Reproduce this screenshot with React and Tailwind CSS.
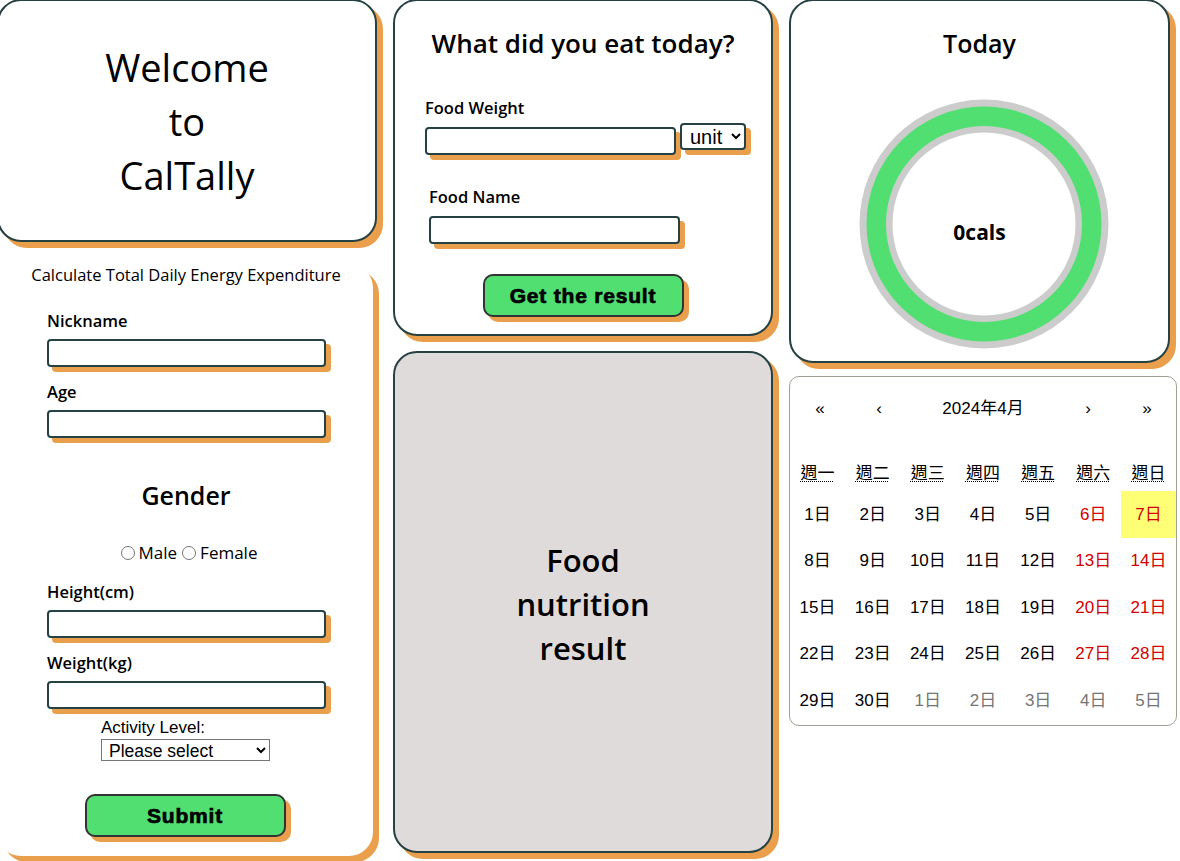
import React from 'react';

const UI = { fontFamily: '"Open Sans", "Noto Sans", sans-serif' };
const ARIAL = { fontFamily: '"Liberation Sans", Arial, sans-serif' };
const CAL = { fontFamily: '"Liberation Sans", Arial, "Noto Sans CJK TC", sans-serif' };

function Field({ label, className = '' }) {
    return (
        <div className={className}>
            <div className="text-[16.5px] font-semibold leading-[22px] text-black">{label}</div>
            <input
                type="text"
                className="mt-[7px] block w-[279px] h-[28px] border-2 border-[#264143] rounded-[4px] bg-white shadow-[5px_5px_0_#E99F4C] outline-none"
            />
        </div>
    );
}

function GreenButton({ children }) {
    return (
        <button
            className="w-[201px] h-[43px] rounded-[10px] border-2 border-[#333333] bg-[#52df72] shadow-[5px_5px_0_#E99F4C] text-[21px] font-bold tracking-[0.8px] text-black [-webkit-text-stroke:0.7px_black]"
            style={ARIAL}
        >
            {children}
        </button>
    );
}

function Calendar() {
    const weekdays = ['週一', '週二', '週三', '週四', '週五', '週六', '週日'];
    const days = [];
    for (let i = 1; i <= 30; i++) days.push({ d: i, cur: true });
    for (let i = 1; i <= 5; i++) days.push({ d: i, cur: false });

    return (
        <div className="w-[388px] h-[350px] border border-[#a0a096] rounded-[10px] bg-white overflow-hidden text-[17px] text-black" style={CAL}>
            {/* navigation */}
            <div className="flex h-[60px] items-center pt-[4px]">
                <div className="w-[60px] text-center">«</div>
                <div className="w-[58px] text-center">‹</div>
                <div className="flex-1 text-center">2024年4月</div>
                <div className="w-[60px] text-center">›</div>
                <div className="w-[58px] text-center">»</div>
            </div>
            <div className="grid grid-cols-7 h-[34px] mt-[20px] items-center">
                {weekdays.map(w => (
                    <div key={w} className="text-center">
                        <abbr className="underline decoration-dotted decoration-1 underline-offset-2" title={w}>{w}</abbr>
                    </div>
                ))}
            </div>
            <div className="grid grid-cols-7">
                {days.map((x, i) => {
                    const col = i % 7;
                    const isToday = x.cur && x.d === 7;
                    const color = !x.cur
                        ? 'text-[#757575]'
                        : col >= 5
                            ? 'text-[#d10000]'
                            : 'text-black';
                    return (
                        <div
                            key={i}
                            className={`h-[46.5px] flex items-center justify-center ${color} ${isToday ? 'bg-[#ffff76]' : ''}`}
                        >
                            {x.d}日
                        </div>
                    );
                })}
            </div>
        </div>
    );
}

export default function App() {
    return (
        <div className="bg-white w-[1180px] h-[861px] overflow-hidden" style={UI}>
            <div className="flex items-start gap-[15px] -mt-[1px] -ml-[3px]">
                {/* column 1 */}
                <div className="w-[380px] flex flex-col">
                    <div className="h-[243px] border-2 border-[#264143] rounded-[24px] bg-white shadow-[6px_6px_0_#E99F4C] flex items-center justify-center">
                        <div className="text-center text-[38px] leading-[54px] text-black">
                            Welcome<br />to<br />CalTally
                        </div>
                    </div>
                    <div className="mt-[22px] w-[376px] h-[592px] rounded-[24px] bg-white shadow-[6px_6px_0_#E99F4C] flex flex-col">
                        <div className="text-center text-[16.5px] leading-[22px] pl-[2px]">
                            Calculate Total Daily Energy Expenditure
                        </div>
                        <div className="pl-[50px]">
                            <Field label="Nickname" className="mt-[24px]" />
                            <Field label="Age" className="mt-[14px]" />
                        </div>
                        <div className="mt-[41px] text-center text-[25px] font-semibold leading-[32px] pl-[2px]">Gender</div>
                        <div className="mt-[31px] flex items-center justify-center gap-[4px] text-[17px] leading-[22px] pl-[8px]">
                            <input type="radio" name="g" className="w-[14px] h-[14px] m-0" />
                            <span>Male</span>
                            <input type="radio" name="g" className="w-[14px] h-[14px] ml-[1px]" />
                            <span>Female</span>
                        </div>
                        <div className="pl-[50px]">
                            <Field label="Height(cm)" className="mt-[17px]" />
                            <Field label="Weight(kg)" className="mt-[14px]" />
                        </div>
                        <div className="mt-[10px] flex justify-center">
                            <div className="w-[169px] ml-[1px]" style={ARIAL}>
                                <div className="text-[17px] leading-[18px]">Activity Level:</div>
                                <select className="mt-[2px] w-[169px] h-[22px] border border-[#767676] bg-white text-[17.5px] leading-[18px] px-[3px]">
                                    <option>Please select</option>
                                </select>
                            </div>
                        </div>
                        <div className="mt-[30px] flex justify-center">
                            <GreenButton>Submit</GreenButton>
                        </div>
                    </div>
                </div>

                {/* column 2 */}
                <div className="w-[380px] flex flex-col ml-[1px]">
                    <div className="h-[337px] border-2 border-[#264143] rounded-[24px] bg-white shadow-[6px_6px_0_#E99F4C] pt-[25px]">
                        <div className="text-center text-[26px] font-semibold leading-[34px]">What did you eat today?</div>
                        <div className="pl-[30px] mt-[37px]">
                            <div className="text-[16.5px] font-semibold leading-[22px]">Food Weight</div>
                            <div className="flex items-start gap-[4px] mt-[8px]">
                                <input
                                    type="text"
                                    className="block w-[251px] h-[28px] border-2 border-[#264143] rounded-[4px] bg-white shadow-[5px_5px_0_#E99F4C] outline-none"
                                />
                                <select
                                    className="-mt-[4px] w-[66px] h-[27px] border-2 border-[#264143] rounded-[4px] bg-white shadow-[5px_5px_0_#E99F4C] text-[20px] leading-[22px] pl-[4px]"
                                    style={ARIAL}
                                >
                                    <option>unit</option>
                                </select>
                            </div>
                        </div>
                        <div className="pl-[34px] mt-[31px]">
                            <div className="text-[16.5px] font-semibold leading-[22px]">Food Name</div>
                            <input
                                type="text"
                                className="mt-[8px] block w-[251px] h-[28px] border-2 border-[#264143] rounded-[4px] bg-white shadow-[5px_5px_0_#E99F4C] outline-none"
                            />
                        </div>
                        <div className="mt-[30px] flex justify-center">
                            <GreenButton>Get the result</GreenButton>
                        </div>
                    </div>
                    <div className="mt-[15px] h-[502px] border-2 border-[#264143] rounded-[24px] bg-[#e0dbdb] shadow-[6px_6px_0_#E99F4C] flex items-center justify-center">
                        <div className="text-center text-[31px] font-semibold leading-[44px] mt-[4px]">
                            Food<br />nutrition<br />result
                        </div>
                    </div>
                </div>

                {/* column 3 */}
                <div className="w-[388px] flex flex-col ml-[1px]">
                    <div className="w-[381px] h-[364px] border-2 border-[#264143] rounded-[24px] bg-white shadow-[6px_6px_0_#E99F4C] pt-[25px] flex flex-col items-center">
                        <div className="text-[25px] font-semibold leading-[34px]">Today</div>
                        <div className="relative mt-[39px] w-[250px] h-[250px] ml-[9px]">
                            <svg width="250" height="250" viewBox="0 0 250 250">
                                <circle cx="125" cy="125" r="124.5" fill="#cccccc" />
                                <circle cx="125" cy="125" r="117.5" fill="#52df72" />
                                <circle cx="125" cy="125" r="98" fill="#cccccc" />
                                <circle cx="125" cy="125" r="91.5" fill="#ffffff" />
                            </svg>
                            <div className="absolute inset-0 flex items-center justify-center pt-[18px] pr-[9px] text-[21px] font-bold">
                                0cals
                            </div>
                        </div>
                    </div>
                    <div className="mt-[13px]">
                        <Calendar />
                    </div>
                </div>
            </div>
        </div>
    );
}
